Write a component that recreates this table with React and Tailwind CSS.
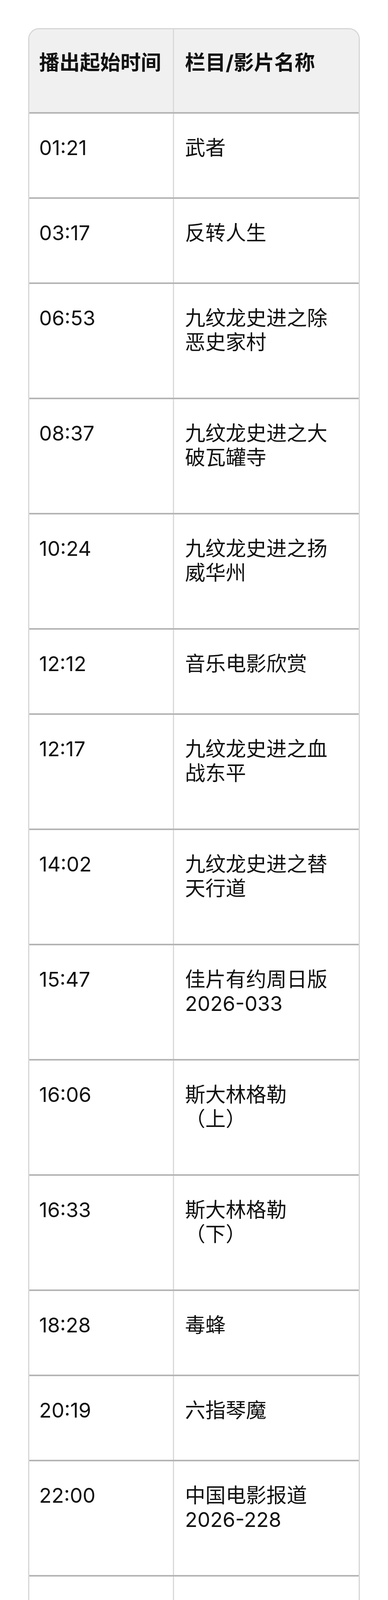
import React from "react";

const rows = [
  { time: "01:21", title: "武者", lines: 1 },
  { time: "03:17", title: "反转人生", lines: 1 },
  { time: "06:53", title: "九纹龙史进之除恶史家村", lines: 2 },
  { time: "08:37", title: "九纹龙史进之大破瓦罐寺", lines: 2 },
  { time: "10:24", title: "九纹龙史进之扬威华州", lines: 2 },
  { time: "12:12", title: "音乐电影欣赏", lines: 1 },
  { time: "12:17", title: "九纹龙史进之血战东平", lines: 2 },
  { time: "14:02", title: "九纹龙史进之替天行道", lines: 2 },
  { time: "15:47", title: "佳片有约周日版2026-033", lines: 2 },
  { time: "16:06", title: "斯大林格勒（上）", lines: 2 },
  { time: "16:33", title: "斯大林格勒（下）", lines: 2 },
  { time: "18:28", title: "毒蜂", lines: 1 },
  { time: "20:19", title: "六指琴魔", lines: 1 },
  { time: "22:00", title: "中国电影报道2026-228", lines: 2 },
  { time: "22:18", title: "中国福利彩票阳光开奖2026-08-16", lines: 3 },
  { time: "22:24", title: "辛德勒的名单（上）", lines: 2 },
  { time: "23:00", title: "中国体育彩票阳光开奖2026-08-16", lines: 3 },
  { time: "23:01", title: "辛德勒的名单（下）", lines: 2 },
];

// row heights by number of wrapped lines in the title column
const rowHeight = {
  1: "h-[218px]",
  2: "h-[295px]",
  3: "h-[372px]",
};

export default function App() {
  return (
    <div
      className="relative h-[5426px] overflow-hidden bg-white px-[72px] pt-[72px] text-[#111] text-[52px] leading-[62px] [text-spacing-trim:space-all]"
      style={{ fontFamily: '"Inter", "Noto Sans CJK SC", sans-serif' }}
    >
      <div className="overflow-hidden rounded-[28px] border-[3px] border-[#d6d6d6]">
        <div className="grid h-[216px] grid-cols-[370px_1fr] border-b-4 border-[#b4b4b4] bg-[#f0f0f0] font-bold">
          <div className="border-r-[3px] border-[#d9d9d9] pt-[55px] pl-[25px] pr-[20px]">
            播出起始时间
          </div>
          <div className="pt-[55px] pl-[28px] pr-[60px]">栏目/影片名称</div>
        </div>

        {rows.map((row, i) => (
          <div
            key={row.time}
            className={`grid grid-cols-[370px_1fr] ${rowHeight[row.lines]} ${
              i < rows.length - 1 ? "border-b-4 border-[#b4b4b4]" : ""
            }`}
          >
            <div className="border-r-[3px] border-[#d9d9d9] pt-[57px] pl-[25px] pr-[20px]">
              {row.time}
            </div>
            <div className="pt-[57px] pl-[28px] pr-[60px]">{row.title}</div>
          </div>
        ))}
      </div>

      {/* screenshot leftover under the table */}
      <div className="absolute top-[5393px] left-[664px] h-[2px] w-[62px] bg-gradient-to-r from-transparent to-[#9a9a9a]" />
      <div className="absolute top-[5366px] left-[724px] h-[38px] w-[16px] rounded-b-full bg-gradient-to-b from-white to-[#3a3a3a]" />
    </div>
  );
}
